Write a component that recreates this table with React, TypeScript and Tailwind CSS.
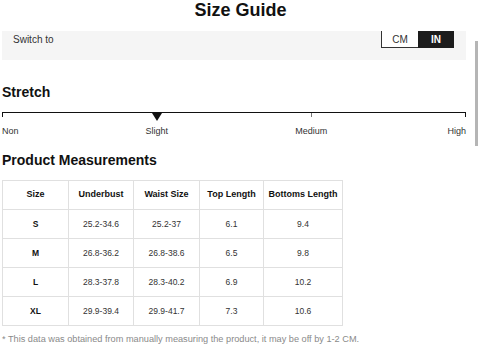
import React from "react";

const rows = [
  ["S", "25.2-34.6", "25.2-37", "6.1", "9.4"],
  ["M", "26.8-36.2", "26.8-38.6", "6.5", "9.8"],
  ["L", "28.3-37.8", "28.3-40.2", "6.9", "10.2"],
  ["XL", "29.9-39.4", "29.9-41.7", "7.3", "10.6"],
];

const headers = ["Size", "Underbust", "Waist Size", "Top Length", "Bottoms Length"];
const widths = ["w-[66px]", "w-[65px]", "w-[66px]", "w-[64px]", "w-[79px]"];

export default function App() {
  return (
    <div
      className="relative w-[481px] h-[349px] overflow-hidden bg-white text-[#222]"
      style={{ fontFamily: '"Liberation Sans", Arial, sans-serif' }}
    >
      <div className="absolute left-[475px] top-[41px] w-[3px] h-[105px] bg-[#b5b5b5]" />

      <h1 className="h-[21px] leading-[21px] text-center text-[18px] font-bold text-[#111]">Size Guide</h1>

      <div className="pl-[2px] pr-[15px]">
        <div className="mt-[10px] h-[29px] bg-[#f5f5f5] flex items-start justify-between pl-[11px] pr-[12px]">
          <div className="h-[17px] flex items-center text-[10px] text-[#333]">Switch to</div>
          <div className="flex h-[17px]">
            <div className="w-[37px] h-[17px] bg-white border-l border-b border-[#333] flex items-center justify-center text-[10px] text-[#333]">
              CM
            </div>
            <div className="w-[36px] h-[17px] bg-[#1c1c1c] flex items-center justify-center text-[10px] font-bold text-white">
              IN
            </div>
          </div>
        </div>

        <h2 className="mt-[24px] h-[16px] leading-[16px] text-[14px] font-bold text-[#111]">Stretch</h2>

        <div className="relative mt-[12px] h-[5px] border-t border-l border-r border-[#111]">
          <div className="absolute left-1/3 -translate-x-1/2 top-0 w-0 h-0 border-l-[5px] border-r-[5px] border-t-[8px] border-l-transparent border-r-transparent border-t-[#111]" />
          <div className="absolute left-2/3 top-0 w-px h-[4px] bg-[#777]" />
        </div>
        <div className="mt-[9px] grid grid-cols-6 text-[9px] leading-[11px] text-[#333]">
          <div className="text-left">Non</div>
          <div className="col-span-2 text-center">Slight</div>
          <div className="col-span-2 text-center">Medium</div>
          <div className="text-right">High</div>
        </div>

        <h2 className="mt-[15px] h-[16px] leading-[16px] text-[14px] font-bold text-[#111]">Product Measurements</h2>

        <table className="mt-[12px] border-collapse table-fixed">
          <thead>
            <tr>
              {headers.map((h, i) => (
                <th
                  key={h}
                  className={`${widths[i]} h-[29px] p-0 border border-[#e0e0e0] text-center text-[9px] font-bold text-[#111]`}
                >
                  {h}
                </th>
              ))}
            </tr>
          </thead>
          <tbody>
            {rows.map((r) => (
              <tr key={r[0]}>
                {r.map((c, i) => (
                  <td
                    key={i}
                    className={`h-[29px] p-0 border border-[#e0e0e0] text-center text-[8.5px] ${
                      i === 0 ? "font-bold text-[#111]" : "text-[#333]"
                    }`}
                  >
                    {c}
                  </td>
                ))}
              </tr>
            ))}
          </tbody>
        </table>

        <p className="mt-[8px] text-[9.2px] leading-[11px] text-[#8a8a8a] whitespace-nowrap">
          * This data was obtained from manually measuring the product, it may be off by 1-2 CM.
        </p>
      </div>
    </div>
  );
}
